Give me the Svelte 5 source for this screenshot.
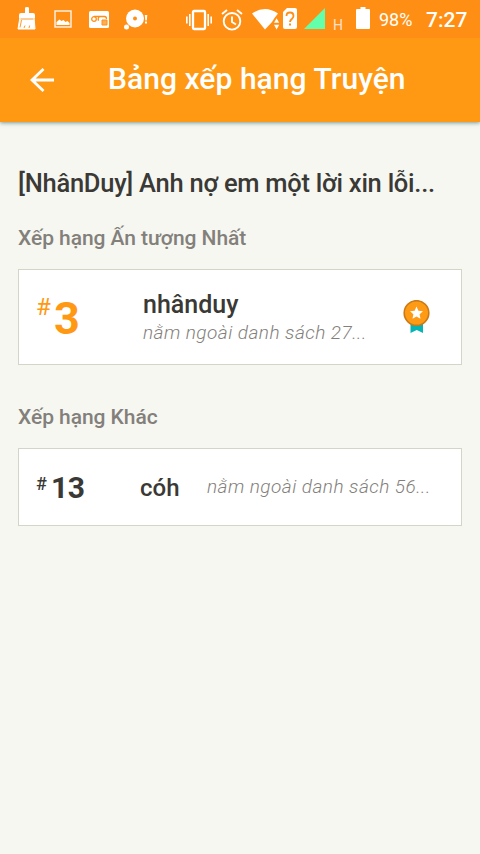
<script lang="ts">
	type Ranking = { rank: number; tag: string; note: string };

	const title = 'Bảng xếp hạng Truyện';
	const story = '[NhânDuy] Anh nợ em một lời xin lỗi...';
	const best: Ranking = { rank: 3, tag: 'nhânduy', note: 'nằm ngoài danh sách 27...' };
	const others: Ranking[] = [{ rank: 13, tag: 'cóh', note: 'nằm ngoài danh sách 56...' }];
</script>

<div class="screen">
	<div class="status">
		<svg class="broom" width="20" height="24" viewBox="0 0 20 24">
			<path d="M8 1q0-1 2-1t2 1v5h4q2 0 2 2v3H2V8q0-2 2-2h4z" fill="#fff" />
			<path d="M3 10h14l1 12H1z" fill="#fff" stroke="#fff" stroke-linejoin="round" />
			<path d="M3.500 12h13M4.500 13L3 20.500M7 21l1-2.500M12 21l.7-2.500" fill="none" stroke="#ff8f14" stroke-width=".9" />
		</svg>
		<svg class="picture" width="18" height="18" viewBox="0 0 18 18">
			<rect x="1" y="1" width="16" height="16" fill="none" stroke="#fff" stroke-opacity=".85" stroke-width="1.500" />
			<path d="M2.500 15v-3l3-2.500 2 1.500 2-1 2 2 2-1 2 2v2z" fill="#fff" />
		</svg>
		<svg class="voicemail" width="20" height="17" viewBox="0 0 20 17">
			<rect width="20" height="17" rx="1.500" fill="#fff" />
			<g fill="none" stroke="#ff8f14" stroke-width="1.300">
				<circle cx="5" cy="8" r="2.300" />
				<path d="M5 5.500h10.500q2 0 2 2.500M11 5.500q-2.500 1-1.500 4.300" />
			</g>
			<path d="M13 9h5v5h-5z" fill="#ffad55" stroke="#ff8f14" />
		</svg>
		<svg class="disc" width="25" height="22" viewBox="0 0 25 22" fill="#fff">
			<circle cx="11" cy="9.500" r="9" />
			<circle cx="11" cy="9.500" r="2" fill="#ff8f14" />
			<circle cx="2.500" cy="18" r="2.500" />
			<path d="M20.800 6h2.500l-.5 5.500h-1.500zM21 12.500h2v2h-2z" />
		</svg>
		<svg class="vibrate" width="28" height="22" viewBox="0 0 28 22" fill="none" stroke="#fff">
			<rect x="8" y="2" width="12" height="18" rx="1" stroke-width="2.300" />
			<path d="M1.800 7.500v7M4.800 5v12M23.200 5v12M26.200 7.500v7" stroke-width="1.600" />
		</svg>
		<svg class="alarm" width="22" height="22" viewBox="0 0 22 22" fill="none" stroke="#fff" stroke-width="1.900">
			<circle cx="11" cy="12.300" r="8.300" />
			<path d="M1 5l5-4M16 1l5 4M11 7.500v5.500l4 2.500" />
		</svg>
		<svg class="wifi" width="28" height="22" viewBox="0 0 28 22" fill="#fff">
			<path d="M0 4.500Q13-4.500 26 4.500L22.500 9 20 13 13 20.500z" />
			<path d="M21 22V13l3.500-6 4 3v12z" fill="#ff8f14" />
			<path d="M22 13.800l2.600-4.600 2.600 4.600zM22 15.800l2.600 4.600 2.600-4.600z" />
		</svg>
		<svg class="sim" width="14" height="22" viewBox="0 0 14 22">
			<path d="M4 0h8q2 0 2 2v17q0 2-2 2H2q-2 0-2-2V4z" fill="#fff" />
			<path d="M3.500 8q0-3.500 3.500-3.500T10.500 8q0 1.500-1.700 3Q7 12.500 7 14" fill="none" stroke="#ff8f14" stroke-width="1.800" />
			<path d="M6 15.500h2v2H6z" fill="#ff8f14" />
		</svg>
		<svg class="signal" width="21" height="21" viewBox="0 0 21 21"><path d="M0 21L21 0v21z" fill="#64ffaa" /></svg>
		<span class="network">H</span>
		<svg class="battery" width="14" height="22" viewBox="0 0 14 22"><path d="M4.500 0h5v2H13q1 0 1 1v18q0 1-1 1H1q-1 0-1-1V3q0-1 1-1h3.500z" fill="#fff" /></svg>
		<span class="percent">98%</span>
		<span class="clock">7:27</span>
	</div>

	<header>
		<svg class="back" width="24" height="24" viewBox="0 0 24 24" fill="none" stroke="#fff" stroke-width="2.800">
			<path d="M24 12H2M13.500 1L2 12l11.500 11" />
		</svg>
		<h1>{title}</h1>
	</header>

	<main>
		<h2>{story}</h2>

		<h3>Xếp hạng Ấn tượng Nhất</h3>
		<div class="card best">
			<div class="rank"><span class="hash">#</span><span class="number">{best.rank}</span></div>
			<div class="info">
				<p class="tag">{best.tag}</p>
				<p class="note">{best.note}</p>
			</div>
			<svg class="medal" width="28" height="34" viewBox="0 0 28 34">
				<path d="M7.500 21h12.500v12l-6.200-3-6.300 3z" fill="#06b4b4" />
				<circle cx="13.500" cy="13" r="12.300" fill="#ff9a14" stroke="#c97916" stroke-width="1.600" />
				<path d="M13.500 6.500l1.900 4.200 4.600.5-3.400 3.100.9 4.500-4-2.300-4 2.300.9-4.500L7 11.200l4.600-.5z" fill="#fff" />
			</svg>
		</div>

		<h3 class="second">Xếp hạng Khác</h3>
		{#each others as item}
			<div class="card other">
				<div class="rank"><span class="hash">#</span><span class="number">{item.rank}</span></div>
				<p class="tag">{item.tag}</p>
				<p class="note">{item.note}</p>
			</div>
		{/each}
	</main>
</div>

<style>
	:global(body) {
		background: #f6f7f1;
	}

	.screen {
		height: 854px;
		overflow: hidden;
		background: #f6f7f1;
		color: #3a3935;
		font-family: Roboto, 'Liberation Sans', sans-serif;
	}

	h1,
	h2,
	h3,
	p {
		margin: 0;
		white-space: nowrap;
	}

	.status {
		position: relative;
		z-index: 1;
		display: flex;
		align-items: flex-start;
		height: 38px;
		background: #ff8f14;
		color: #fff;
	}
	.status > * {
		flex: none;
	}

	.broom {
		margin: 7px 0 0 17px;
	}
	.picture {
		margin: 10px 0 0 17px;
	}
	.voicemail {
		margin: 11px 0 0 17px;
	}
	.disc {
		margin: 9px 0 0 15px;
	}
	.vibrate {
		margin: 9px 0 0 36px;
	}
	.alarm {
		margin: 9px 0 0 8px;
	}
	.wifi {
		margin: 9px 0 0 9px;
	}
	.sim {
		margin: 8px 0 0 3px;
	}
	.signal {
		margin: 8px 0 0 7px;
	}
	.network {
		width: 10px;
		margin: 16px 0 0 8px;
		font-size: 14px;
		line-height: 18px;
		color: #ffe0d0;
	}
	.battery {
		margin: 7px 0 0 13px;
	}
	.percent {
		width: 34px;
		margin: 9px 0 0 9px;
		font-size: 18px;
		line-height: 22px;
	}
	.clock {
		margin: 7px 0 0 13px;
		font-size: 21px;
		font-weight: 500;
		line-height: 26px;
	}

	header {
		position: relative;
		display: flex;
		align-items: center;
		height: 84px;
		background: #ff9914;
		color: #fff;
		box-shadow: 0 1px 4px rgba(0, 60, 60, 0.5);
	}
	.back {
		margin-left: 30px;
	}
	h1 {
		margin: -3px 0 0 54px;
		font-size: 30px;
		font-weight: 500;
		line-height: 40px;
		letter-spacing: 0.05px;
	}

	main {
		padding: 43px 18px 0;
	}
	h2 {
		font-size: 25.5px;
		font-weight: 500;
		line-height: 36px;
		letter-spacing: -0.26px;
	}
	h3 {
		margin-top: 23px;
		color: #83807b;
		font-size: 21px;
		font-weight: 500;
		line-height: 28px;
		letter-spacing: -0.05px;
	}
	.second {
		margin-top: 38px;
	}

	.card {
		display: flex;
		align-items: center;
		box-sizing: border-box;
		margin-top: 17px;
		padding-left: 17px;
		border: 1px solid #d3d5c8;
		background: #fff;
	}
	.best {
		height: 96px;
	}
	.other {
		height: 78px;
	}

	.rank {
		display: flex;
		align-items: flex-start;
		flex: none;
	}
	.best .rank {
		width: 107px;
		padding-top: 3px;
		color: #ff9914;
	}
	.best .hash {
		width: 18px;
		font-size: 24px;
		line-height: 26px;
	}
	.best .number {
		font-size: 45px;
		font-weight: 700;
		line-height: 50px;
	}
	.other .rank {
		width: 104px;
		padding-top: 1px;
	}
	.other .hash {
		width: 15px;
		font-size: 18px;
		font-weight: 500;
		line-height: 28px;
	}
	.other .number {
		font-size: 30px;
		font-weight: 700;
		line-height: 36px;
		letter-spacing: -0.4px;
	}

	.info {
		width: 260px;
		padding-top: 2px;
	}
	.tag {
		font-size: 25px;
		font-weight: 500;
		line-height: 30px;
	}
	.other .tag {
		width: 67px;
		padding-top: 2px;
		font-size: 24px;
	}
	.note {
		color: #83807b;
		font-size: 19px;
		font-style: italic;
		font-weight: 300;
		line-height: 26px;
		letter-spacing: 0.46px;
	}
</style>
